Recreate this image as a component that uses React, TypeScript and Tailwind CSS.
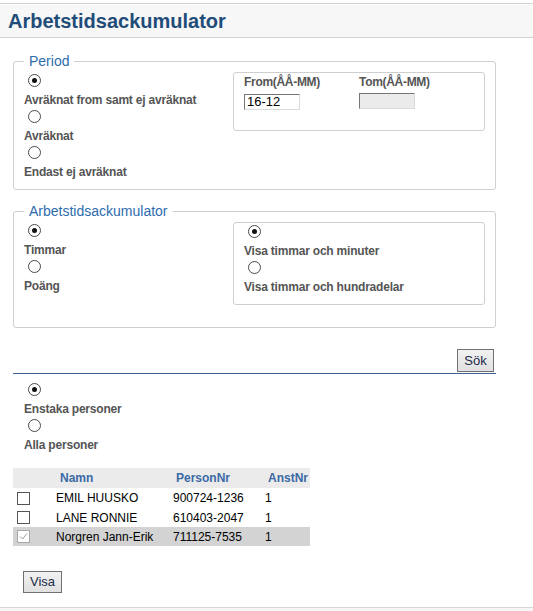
import React from 'react';

// ─── Small native-looking controls ────────────────────────────────────────────
function Radio({ checked = false }: { checked?: boolean }) {
	return (
		<span className="ml-[4px] flex h-[13px] w-[13px] items-center justify-center rounded-full border border-[#4a4a4a] bg-white">
			{checked && <span className="h-[5px] w-[5px] rounded-full bg-[#111]" />}
		</span>
	);
}

function Option({ label, checked = false }: { label: string; checked?: boolean }) {
	return (
		<div>
			<div className="h-[16px]">
				<Radio checked={checked} />
			</div>
			<div className="text-[12px] leading-[20px] font-bold tracking-[-0.2px] text-[#555]">{label}</div>
		</div>
	);
}

function CheckBox({ checked = false }: { checked?: boolean }) {
	if (checked) {
		return (
			<span className="flex h-[13px] w-[13px] items-center justify-center border border-[#a8a8a8] bg-white">
				<svg width="9" height="9" viewBox="0 0 9 9">
					<polyline points="1,4.5 3.5,7 8,1.5" fill="none" stroke="#9a9a9a" strokeWidth="1" />
				</svg>
			</span>
		);
	}
	return <span className="block h-[13px] w-[13px] border border-[#555] bg-white" />;
}

function Button({ children, className }: { children: React.ReactNode; className?: string }) {
	return (
		<button
			type="button"
			className={`flex items-center justify-center border border-[#707070] bg-gradient-to-b from-[#f2f2f2] to-[#e0e0e0] text-[13px] text-[#1c2a48] ${className ?? ''}`}
		>
			{children}
		</button>
	);
}

const people = [
	{ name: 'EMIL HUUSKO', nr: '900724-1236', anst: '1', selected: false },
	{ name: 'LANE RONNIE', nr: '610403-2047', anst: '1', selected: false },
	{ name: 'Norgren Jann-Erik', nr: '711125-7535', anst: '1', selected: true },
];

// ─── Page ─────────────────────────────────────────────────────────────────────
export default function App() {
	return (
		<div className="flex min-h-[611px] w-[533px] flex-col bg-white font-['Liberation_Sans',Arial,sans-serif]">
			{/* Title bar */}
			<div className="mt-[3px] border-t border-[#d2d2d2] pt-px">
				<div className="flex h-[33px] items-center border-b border-[#d2d2d2] bg-[#f7f7f7] pl-[8px]">
					<h1 className="text-[20px] leading-[24px] font-bold text-[#1f4c78]">Arbetstidsackumulator</h1>
				</div>
			</div>

			{/* Period */}
			<fieldset className="mt-[15px] ml-[13px] w-[483px] rounded-[3px] border border-[#cfcfcf] px-[10px] pb-[7px]">
				<legend className="px-[5px] text-[14px] leading-[16px] text-[#2e6cae]">Period</legend>
				<div className="flex items-start">
					<div className="w-[209px] pt-[5px]">
						<Option checked label="Avräknat from samt ej avräknat" />
						<Option label="Avräknat" />
						<Option label="Endast ej avräknat" />
					</div>
					<div className="mt-[3px] flex h-[59px] flex-1 rounded-[3px] border border-[#cfcfcf] pt-[2px] pl-[10px]">
						<div className="w-[115px]">
							<div className="text-[12px] leading-[14px] font-bold tracking-[-0.3px] text-[#555]">From(ÅÅ-MM)</div>
							<input
								readOnly
								value="16-12"
								className="h-[16px] w-[56px] border border-t-[#767676] border-r-[#dadada] border-b-[#dadada] border-l-[#767676] bg-white pl-[2px] text-[13px] leading-[14px] text-black"
							/>
						</div>
						<div>
							<div className="text-[12px] leading-[14px] font-bold tracking-[-0.3px] text-[#555]">Tom(ÅÅ-MM)</div>
							<input
								disabled
								className="h-[16px] w-[56px] border border-t-[#767676] border-r-[#dadada] border-b-[#dadada] border-l-[#767676] bg-[#ebebeb]"
							/>
						</div>
					</div>
				</div>
			</fieldset>

			{/* Arbetstidsackumulator */}
			<fieldset className="mt-[13px] ml-[13px] w-[483px] rounded-[3px] border border-[#cfcfcf] px-[10px] pb-[22px]">
				<legend className="px-[5px] text-[14px] leading-[16px] text-[#2e6cae]">Arbetstidsackumulator</legend>
				<div className="flex items-start">
					<div className="w-[209px] pt-[5px]">
						<Option checked label="Timmar" />
						<Option label="Poäng" />
					</div>
					<div className="mt-[3px] flex-1 rounded-[3px] border border-[#cfcfcf] pt-[2px] pb-[7px] pl-[10px]">
						<Option checked label="Visa timmar och minuter" />
						<Option label="Visa timmar och hundradelar" />
					</div>
				</div>
			</fieldset>

			{/* Search bar */}
			<div className="mt-[21px] ml-[13px] flex w-[483px] justify-end border-b border-[#3d6491] pr-[2px] pb-px">
				<Button className="h-[23px] w-[37px]">Sök</Button>
			</div>

			{/* Person selection */}
			<div className="mt-[9px] ml-[24px]">
				<Option checked label="Enstaka personer" />
				<Option label="Alla personer" />
			</div>

			<div className="mt-[13px] ml-[13px] w-[297px] text-[12px]">
				<div className="grid h-[20px] grid-cols-[39px_117px_92px_49px] items-center bg-[#ebebeb] font-bold text-[#3a6aa5]">
					<span />
					<span className="pl-[8px]">Namn</span>
					<span className="pl-[7px]">PersonNr</span>
					<span className="pl-[7px]">AnstNr</span>
				</div>
				{people.map((p, i) => (
					<div
						key={p.nr}
						className={`grid grid-cols-[39px_117px_92px_49px] items-center text-black ${
							i === 0 ? 'h-[20px]' : 'h-[19px]'
						} ${p.selected ? 'bg-[#d3d3d3]' : ''}`}
					>
						<span className="pl-[4px]">
							<CheckBox checked={p.selected} />
						</span>
						<span className="pl-[4px]">{p.name}</span>
						<span className="pl-[4px]">{p.nr}</span>
						<span className="pl-[4px]">{p.anst}</span>
					</div>
				))}
			</div>

			<Button className="mt-[25px] ml-[23px] h-[22px] w-[39px]">Visa</Button>

			<div className="mt-[14px] flex-1 border-t border-[#d6d6d6] bg-[#f6f6f6]" />
		</div>
	);
}
